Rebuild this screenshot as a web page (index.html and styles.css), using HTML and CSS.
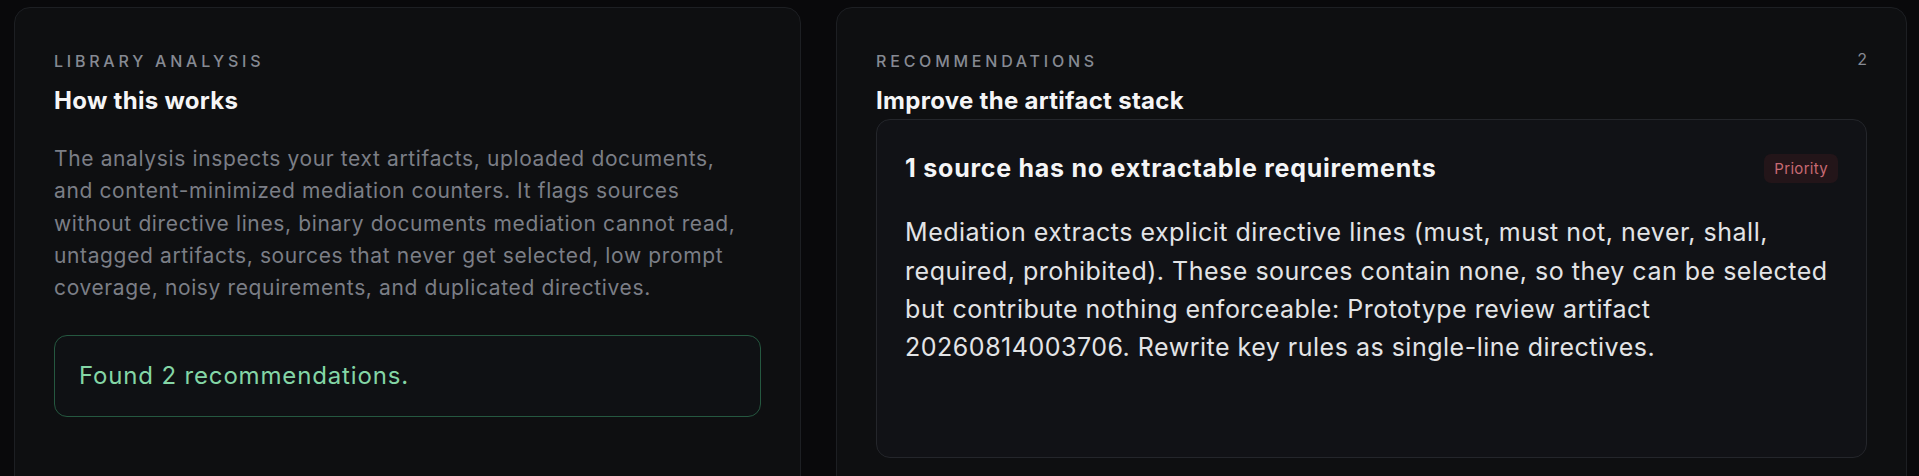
FILE: index.html
```html
<!DOCTYPE html>
<html>
<head>
    <title>Library Analysis</title>
    <link rel="stylesheet" href="styles.css">
</head>
<body>
    <main class="analysis-grid">
        <section class="card">
            <p class="eyebrow">Library Analysis</p>
            <h2 class="card-title">How this works</h2>
            <p class="intro">The analysis inspects your text artifacts, uploaded documents, and content-minimized mediation counters. It flags sources without directive lines, binary documents mediation cannot read, untagged artifacts, sources that never get selected, low prompt coverage, noisy requirements, and duplicated directives.</p>
            <div class="result-note">Found 2 recommendations.</div>
        </section>

        <section class="card">
            <div class="card-head">
                <div>
                    <p class="eyebrow">Recommendations</p>
                    <h2 class="card-title">Improve the artifact stack</h2>
                </div>
                <span class="count">2</span>
            </div>
            <article class="rec">
                <div class="rec-head">
                    <h3 class="rec-title">1 source has no extractable requirements</h3>
                    <span class="badge">Priority</span>
                </div>
                <p class="rec-body">Mediation extracts explicit directive lines (must, must not, never, shall, required, prohibited). These sources contain none, so they can be selected but contribute nothing enforceable: Prototype review artifact 20260814003706. Rewrite key rules as single-line directives.</p>
            </article>
        </section>
    </main>
</body>
</html>
```

FILE: styles.css
```css
body {
    margin: 0;
    padding: 7px 12px 0 14px;
    background-color: #09090b;
    font-family: Inter, "Noto Sans", sans-serif;
    color: #f2f2f3;
    overflow: hidden;
}
.analysis-grid {
    display: grid;
    grid-template-columns: minmax(0, 0.735fr) minmax(0, 1fr);
    gap: 35px;
}
.card {
    background-color: #0e0f11;
    border: 1px solid #1d1f23;
    border-radius: 16px;
    padding: 41px 39px 60px;
    min-height: 520px;
}
.card-head {
    display: flex;
    justify-content: space-between;
    align-items: flex-start;
}
.eyebrow {
    margin: 0 0 12px;
    font-size: 16px;
    line-height: 24px;
    font-weight: 500;
    letter-spacing: 0.235em;
    text-transform: uppercase;
    color: #868a93;
}
.count {
    font-size: 16px;
    line-height: 1.3;
    color: #868a93;
}
.card-title {
    margin: 0;
    font-size: 24px;
    line-height: 1.3;
    font-weight: 700;
    letter-spacing: 0.012em;
    color: #f5f5f6;
}
.intro {
    margin: 27px 0 0;
    max-width: 697px;
    font-size: 21px;
    line-height: 32.3px;
    letter-spacing: 0.03em;
    color: #7b7e86;
}
.result-note {
    margin-top: 30px;
    padding: 22px 24px;
    border: 1px solid #255840;
    border-radius: 13px;
    background-color: #0f1114;
    font-size: 24px;
    line-height: 36px;
    letter-spacing: 0.035em;
    color: #84d6a6;
}
.rec {
    margin-top: 3px;
    min-height: 339px;
    box-sizing: border-box;
    padding: 33px 28px 32px;
    background-color: #111216;
    border: 1px solid #24262b;
    border-radius: 14px;
}
.rec-head {
    display: flex;
    justify-content: space-between;
    align-items: center;
}
.rec-title {
    margin: 0;
    font-size: 25px;
    line-height: 1.2;
    font-weight: 700;
    letter-spacing: 0.03em;
    color: #f5f5f6;
}
.badge {
    padding: 4px 10px;
    border-radius: 7px;
    background-color: #231519;
    font-size: 15px;
    line-height: 21px;
    letter-spacing: 0.02em;
    color: #c76a73;
}
.rec-body {
    margin: 30px 0 0;
    font-size: 25px;
    line-height: 38.4px;
    letter-spacing: 0.02em;
    color: #e3e4e6;
}
```
